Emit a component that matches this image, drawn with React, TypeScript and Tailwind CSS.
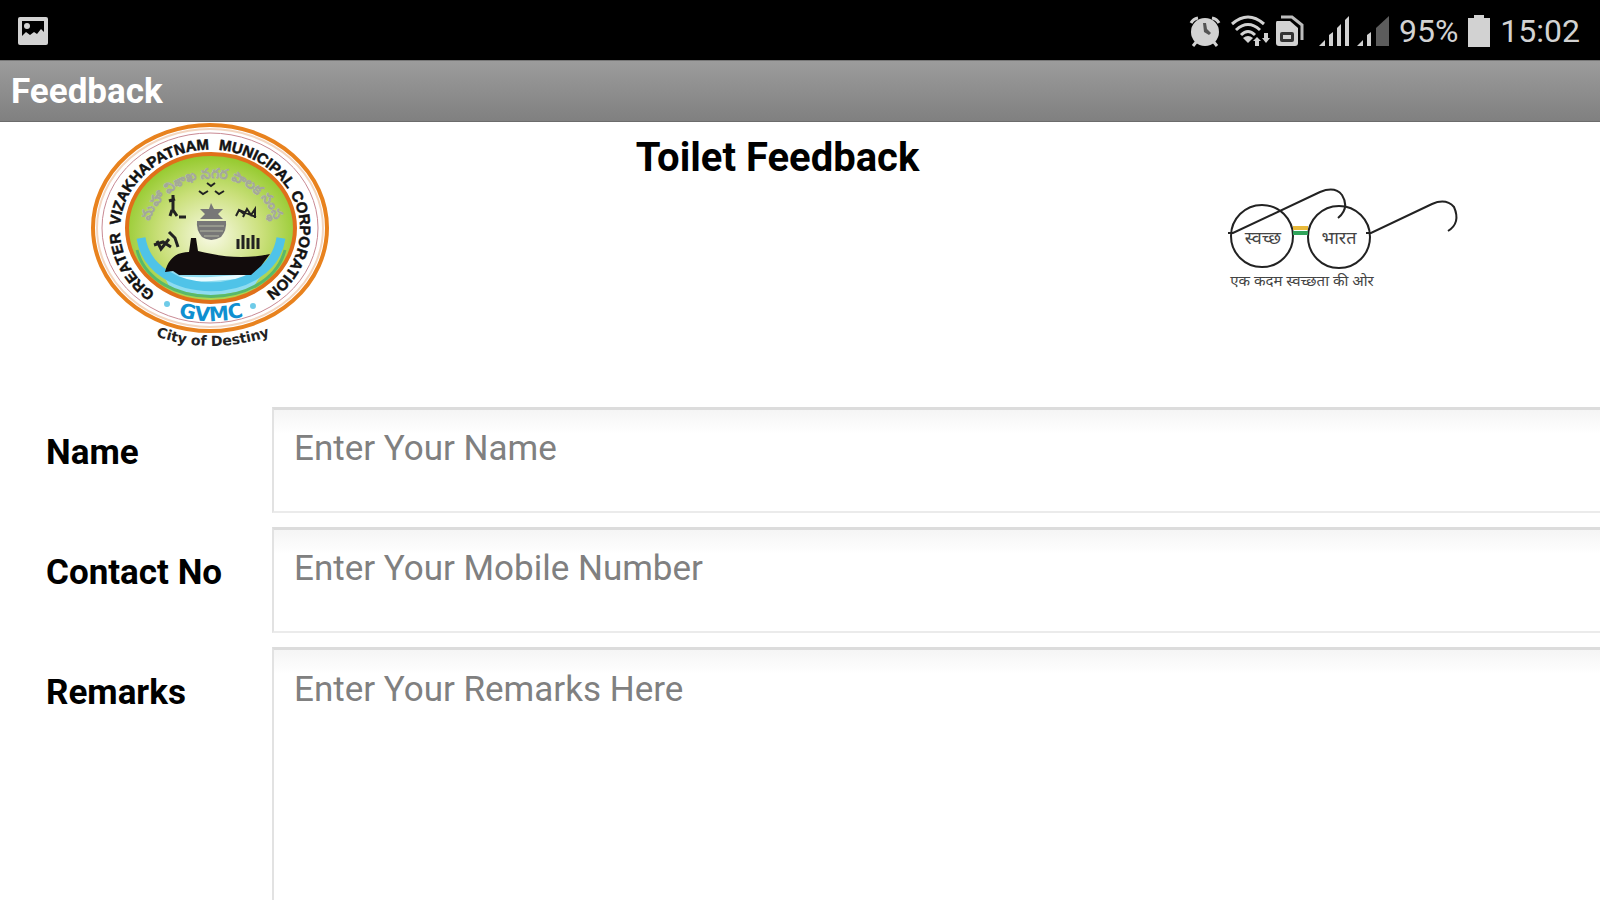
import type { ReactNode } from 'react';

function PictureIcon() {
  return (
    <svg viewBox="0 0 30 28" className="h-7 w-[30px]" aria-hidden="true">
      <rect width="30" height="28" rx="2" fill="#d2d2d2" />
      <path d="M4 4H26V15L23 12L19 17L16 15L12 18L8 15L4 19Z" fill="#000" />
      <circle cx="9" cy="9" r="3" fill="#d2d2d2" />
    </svg>
  );
}

function AlarmIcon() {
  return (
    <svg viewBox="0 0 32 32" className="size-8" aria-hidden="true">
      <circle cx="16" cy="17" r="14" fill="#d2d2d2" />
      <path d="M2 8Q4 4 9 3M30 8Q28 4 23 3" stroke="#d2d2d2" strokeWidth="3" fill="none" />
      <path d="M8 26L4 31M24 26L28 31" stroke="#d2d2d2" strokeWidth="3" />
      <path d="M14 8H17L18 14L22 18L20 20L15 17Z" fill="#555" />
    </svg>
  );
}

function WifiIcon() {
  return (
    <svg viewBox="0 0 40 32" className="h-8 w-10" aria-hidden="true">
      <g fill="none" stroke="#d2d2d2" strokeWidth="3">
        <path d="M1 9Q17 -5 33 9" />
        <path d="M5 15Q17 4 29 15" />
        <path d="M10 20Q17 13 24 20" />
      </g>
      <path d="M12 23Q17 19 22 23L17 28Z" fill="#d2d2d2" />
      <path d="M26 22L30 26H28V31H24V26H22ZM33 18H37V23H39L35 28L31 23H33Z" fill="#d2d2d2" />
    </svg>
  );
}

function SimIcon() {
  return (
    <svg viewBox="0 0 30 32" className="h-8 w-[30px]" aria-hidden="true">
      <path d="M2 6H15L23 13V28Q23 31 20 31H4Q1 31 1 28V8Q1 6 2 6Z" fill="#d2d2d2" />
      <path d="M6 2H17L27 10V25" fill="none" stroke="#bdbdbd" strokeWidth="3" />
      <rect x="5" y="17" width="14" height="10" rx="2" fill="#333" />
      <rect x="8" y="20" width="8" height="4" fill="#d2d2d2" />
    </svg>
  );
}

function SignalIcon({ weak = false }: { weak?: boolean }) {
  return (
    <svg viewBox="0 0 32 32" className="size-8" aria-hidden="true">
      <path d="M0 31L6 25V31Z" fill="#d2d2d2" />
      <path d="M10 20L14 17V31H10Z" fill="#d2d2d2" />
      {weak ? (
        <path d="M19 13L32 1V31H19Z" fill="#5c5c5c" />
      ) : (
        <path d="M18 13L22 9V31H18ZM26 5L30 1V31H26Z" fill="#d2d2d2" />
      )}
    </svg>
  );
}

function BatteryIcon() {
  return (
    <svg viewBox="0 0 22 32" className="h-8 w-[22px]" aria-hidden="true">
      <path d="M6 0H16V3H22V32H0V3H6Z" fill="#d2d2d2" />
    </svg>
  );
}

function StatusBar() {
  return (
    <div className="flex h-[60px] items-center bg-black pt-[2px] pr-5 pl-[18px] text-[32px] text-[#d2d2d2]">
      <PictureIcon />
      <div className="ml-auto flex items-center">
        <AlarmIcon />
        <span className="ml-[10px]"><WifiIcon /></span>
        <span className="ml-1"><SimIcon /></span>
        <span className="ml-[14px]"><SignalIcon /></span>
        <span className="ml-[6px]"><SignalIcon weak /></span>
        <span className="ml-[10px]">95%</span>
        <span className="ml-[10px]"><BatteryIcon /></span>
        <span className="ml-[10px]">15:02</span>
      </div>
    </div>
  );
}

function GvmcSeal() {
  return (
    <svg viewBox="0 0 240 232" className="h-[232px] w-60" role="img" aria-label="Greater Vizakhapatnam Municipal Corporation">
      <defs>
        <radialGradient id="field" cx="50%" cy="55%" r="55%">
          <stop offset="0%" stopColor="#f9fae6" />
          <stop offset="55%" stopColor="#cbe07c" />
          <stop offset="100%" stopColor="#92c92a" />
        </radialGradient>
        <clipPath id="inner"><ellipse cx="120" cy="106" rx="82" ry="72" /></clipPath>
        <path id="ring" d="M64 171A90 80 0 1 1 174 171" />
        <path id="script" d="M56 115A65 59 0 1 1 186 115" />
        <path id="lower" d="M30 150A101 90 0 0 0 210 150" />
        <path id="motto" d="M54 210Q120 238 190 210" />
      </defs>
      <ellipse cx="119" cy="106" rx="117" ry="103" fill="#fff" stroke="#e8821e" strokeWidth="4" />
      <ellipse cx="119" cy="106" rx="113" ry="99" fill="none" stroke="#f3d6c0" strokeWidth="2" />
      <ellipse cx="119" cy="106" rx="108" ry="95" fill="none" stroke="#c98a94" strokeWidth="1" />
      <ellipse cx="120" cy="106" rx="84" ry="74" fill="url(#field)" stroke="#e0701a" strokeWidth="4" />
      <g clipPath="url(#inner)">
        <path d="M70 148H174L160 168L120 174L80 168Z" fill="#8fdcf0" />
        <path d="M76 155Q100 158 120 157T168 153" stroke="#e8fbff" strokeWidth="4" fill="none" />
        <path d="M50 116C60 181 180 181 190 116" fill="none" stroke="#4fc3e8" strokeWidth="9" />
        <path d="M46 128C62 190 178 190 194 128" fill="none" stroke="#58b96a" strokeWidth="3" />
        <path d="M74 150C78 134 88 130 98 130L100 116H105L107 129C128 134 150 138 179 132L170 144L160 153H88L82 149Z" fill="#120c0c" />
      </g>
      <text className="font-['Liberation_Sans',sans-serif] text-[14px] font-bold" fill="#eceee6" stroke="#a3a898" strokeWidth="0.5" textAnchor="middle">
        <textPath href="#script" startOffset="50%">మహా విశాఖ నగర పాలక సంస్థ</textPath>
      </text>
      <g stroke="#222" strokeWidth="2" fill="none">
        <path d="M116 61L120 64L124 61M108 69L112 72L117 69M124 69L128 72L133 69" />
        <path d="M82 73V90M78 79L84 77M81 88L79 94M82 88L86 94M88 95H95" strokeWidth="3" />
        <path d="M145 94L148 88L153 92M152 95L156 87L160 93L164 87V96M148 88L165 95" />
        <path d="M63 123L72 120L80 125M78 110L84 116L87 125M66 119L70 127L78 117" strokeWidth="3" />
        <path d="M147 117V127M152 113V127M157 116V127M162 113V127M167 116V127" strokeWidth="3" />
      </g>
      <g fill="#777">
        <path d="M120 81L123 87H132L127 92L132 97H109L114 92L109 87H118Z" />
        <path d="M106 99H135Q136 108 130 115Q120 121 111 115Q105 108 106 99Z" />
      </g>
      <path d="M108 104H133M109 109H132M113 114H128" stroke="#b5b9a4" strokeWidth="1" />
      <g className="font-['Liberation_Sans'] text-[15px] font-bold" fill="#111" stroke="#111" strokeWidth="0.5">
        <text><textPath href="#ring" startOffset="0%">GREATER</textPath></text>
        <text><textPath href="#ring" startOffset="19%">VIZAKHAPATNAM</textPath></text>
        <text><textPath href="#ring" startOffset="52%">MUNICIPAL</textPath></text>
        <text><textPath href="#ring" startOffset="73%">CORPORATION</textPath></text>
      </g>
      <text className="font-['DejaVu_Sans'] text-[20px] font-bold" fill="#0f8fd0" textAnchor="middle">
        <textPath href="#lower" startOffset="50%">GVMC</textPath>
      </text>
      <circle cx="76" cy="182" r="3" fill="#6fcbe8" />
      <circle cx="162" cy="184" r="3" fill="#6fcbe8" />
      <text className="font-['DejaVu_Sans'] text-[14px] font-bold" fill="#222" textAnchor="middle">
        <textPath href="#motto" startOffset="50%">City of Destiny</textPath>
      </text>
    </svg>
  );
}

function SpectaclesLogo() {
  return (
    <svg viewBox="24 14 240 108" className="h-[108px] w-60" role="img" aria-label="स्वच्छ भारत">
      <g fill="none" stroke="#222" strokeWidth="2">
        <circle cx="62" cy="66" r="31" />
        <circle cx="139" cy="67" r="31" />
        <path d="M28 63H33L120 22Q135 16 142 25Q150 38 138 48" />
        <path d="M166 63H171L232 34Q246 28 254 37Q261 53 248 61" />
      </g>
      <path d="M93 58H108" stroke="#e8b93a" strokeWidth="4" />
      <path d="M93 63H108" stroke="#2fa35a" strokeWidth="4" />
      <g className="font-['Noto_Sans',sans-serif]" fill="#444" textAnchor="middle">
        <text x="63" y="74" className="text-[18px]">स्वच्छ</text>
        <text x="139" y="74" className="text-[18px]">भारत</text>
        <text x="102" y="116" className="text-[15px]">एक कदम स्वच्छता की ओर</text>
      </g>
    </svg>
  );
}

const fieldClass =
  'block w-full resize-none border-t-3 border-b-2 border-l-2 border-t-[#dcdcdc] border-b-[#ebebeb] border-l-[#e2e2e2] bg-linear-to-b from-[#f5f5f5] to-white to-[24px] px-5 text-[35px] leading-10 outline-none placeholder:text-[#808080]';

function Row({ id, label, children }: { id: string; label: string; children: ReactNode }) {
  return (
    <div className="flex">
      <label htmlFor={id} className="mt-[26px] w-[226px] shrink-0 text-[35px] leading-10 font-bold">
        {label}
      </label>
      <div className="flex-1">{children}</div>
    </div>
  );
}

export default function App() {
  return (
    <div className="h-screen overflow-hidden bg-white font-[Roboto,sans-serif] text-black">
      <StatusBar />
      <header className="flex h-[62px] items-center border-y border-t-[#777] border-b-[#6c6c6c] bg-linear-to-b from-[#9c9c9c] to-[#808080] px-[11px] pt-[3px] text-[35px] font-bold text-white">
        Feedback
      </header>
      <main>
        <div className="flex items-start justify-between pr-[136px] pl-[91px]">
          <GvmcSeal />
          <h1 className="mt-[13px] text-[40px] leading-[46px] font-bold">Toilet Feedback</h1>
          <div className="mt-[62px]"><SpectaclesLogo /></div>
        </div>
        <form className="mt-[53px] flex flex-col gap-[14px] pl-[46px]">
          <Row id="name" label="Name">
            <input id="name" type="text" placeholder="Enter Your Name" className={`${fieldClass} h-[106px] pb-6`} />
          </Row>
          <Row id="contact" label="Contact No">
            <input id="contact" type="tel" placeholder="Enter Your Mobile Number" className={`${fieldClass} h-[106px] pb-6`} />
          </Row>
          <Row id="remarks" label="Remarks">
            <textarea id="remarks" placeholder="Enter Your Remarks Here" className={`${fieldClass} h-80 pt-5`} />
          </Row>
        </form>
      </main>
    </div>
  );
}
